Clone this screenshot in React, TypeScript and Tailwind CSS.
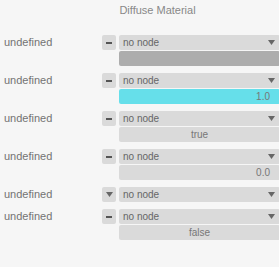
import React from 'react';

type Value =
  | { kind: 'swatch'; color: string }
  | { kind: 'number'; text: string; color?: string }
  | { kind: 'bool'; text: string }
  | null;

interface Row {
  button: 'minus' | 'down';
  value: Value;
}

const rows: Row[] = [
  { button: 'minus', value: { kind: 'swatch', color: '#adadad' } },
  { button: 'minus', value: { kind: 'number', text: '1.0', color: '#66dfea' } },
  { button: 'minus', value: { kind: 'bool', text: 'true' } },
  { button: 'minus', value: { kind: 'number', text: '0.0' } },
  { button: 'down', value: null },
  { button: 'minus', value: { kind: 'bool', text: 'false' } },
];

function Triangle() {
  return (
    <svg width="7" height="5" viewBox="0 0 7 5" className="block">
      <path d="M0 0 H7 L3.5 5 Z" fill="#666" />
    </svg>
  );
}

function SmallButton({ kind }: { kind: Row['button'] }) {
  return (
    <div className="flex h-[15px] w-[14px] shrink-0 items-center justify-center rounded-[2px] bg-[#dadada]">
      {kind === 'minus' ? <div className="h-[2px] w-[6px] bg-[#555]" /> : <Triangle />}
    </div>
  );
}

function ValueBox({ value }: { value: Value }) {
  if (!value) return null;
  if (value.kind === 'swatch') {
    return <div className="h-[15px] rounded-[2px]" style={{ backgroundColor: value.color }} />;
  }
  if (value.kind === 'number') {
    return (
      <div
        className="flex h-[15px] items-center justify-end rounded-[2px] pr-[10px] text-[10px] text-[#777]"
        style={{ backgroundColor: value.color ?? '#dadada' }}
      >
        {value.text}
      </div>
    );
  }
  return (
    <div className="flex h-[15px] items-center justify-center rounded-[2px] bg-[#dadada] text-[10px] text-[#777]">
      {value.text}
    </div>
  );
}

export default function App() {
  return (
    <div className="h-[267px] w-[279px] overflow-hidden bg-[#f6f6f6] font-['Liberation_Sans',Arial,sans-serif]">
      <div className="pl-[119px] pt-[4px] text-[11px] leading-[13px] text-[#888]">
        <div className="w-[77px] text-center">Diffuse Material</div>
      </div>
      <div className="mt-[18px] flex flex-col gap-[7px]">
        {rows.map((row, i) => (
          <div key={i} className="flex items-start">
            <div className="flex h-[15px] w-[102px] shrink-0 items-center pl-[4px] text-[11px] text-[#737373]">
              undefined
            </div>
            <SmallButton kind={row.button} />
            <div className="ml-[3px] flex w-[161px] shrink-0 flex-col gap-[1px]">
              <div className="flex h-[15px] items-center justify-between rounded-[2px] bg-[#dadada] pl-[4px] pr-[5px] text-[10px] text-[#666]">
                <span>no node</span>
                <Triangle />
              </div>
              <ValueBox value={row.value} />
            </div>
          </div>
        ))}
      </div>
    </div>
  );
}
